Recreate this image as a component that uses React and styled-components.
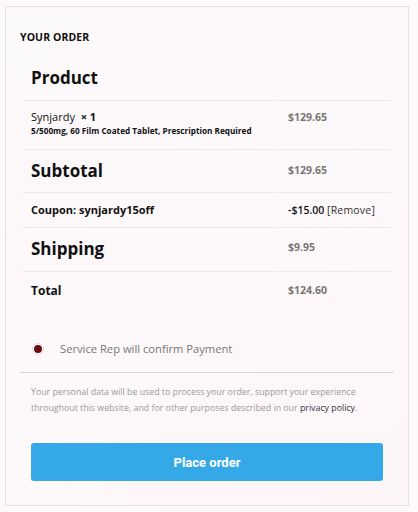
import React from "react"
import styled, { createGlobalStyle } from "styled-components"

const Global = createGlobalStyle`
  html, body { margin: 0; padding: 0; background: #fdf8fa; }
  body { font-family: "Open Sans", "Noto Sans", sans-serif; }
`

const Card = styled.div`
  margin: 6px 9px 0 5px;
  height: 500px;
  box-sizing: border-box;
  border: 1px solid #e3e1e3;
  background: linear-gradient(135deg, #fcf9fa 0%, #fdf6f9 100%);
  padding: 23px 15px 0 14px;
`

const Heading = styled.h3`
  margin: 0 0 12px;
  font-size: 10.5px;
  line-height: 14px;
  font-weight: 700;
  letter-spacing: 0.1px;
  color: #111;
`

const Table = styled.table`
  width: 372px;
  margin-left: 1px;
  border-collapse: separate;
  border-spacing: 2px 0;
  table-layout: fixed;
`

const Cell = styled.td`
  padding: ${p => p.$pad || "10px 8px"};
  border-bottom: ${p => (p.$last ? "none" : "1px solid #ebe7ea")};
  vertical-align: ${p => p.$valign || "top"};
  text-align: left;
  line-height: 14px;
  color: #111;
`

const Label = styled.span`
  display: block;
  font-size: ${p => p.$size}px;
  line-height: ${p => (p.$size > 14 ? 20 : 14)}px;
  font-weight: 700;
  color: #111;
`

const Price = styled.span`
  display: block;
  font-size: 10.5px;
  line-height: 14px;
  font-weight: 700;
  color: #777;
`

const Item = styled.div`
  font-size: 11px;
  line-height: 14px;
  color: #111;
  font-weight: 500;
`

const Meta = styled.div`
  font-size: 8.2px;
  line-height: 10px;
  font-weight: 700;
  color: #111;
  margin-top: 2px;
  white-space: nowrap;
`

const Discount = styled.span`
  display: block;
  font-size: 10.5px;
  line-height: 14px;
  font-weight: 600;
  color: #111;
  white-space: nowrap;
  a { color: #333; font-weight: 500; letter-spacing: 0.2px; }
`

const Payment = styled.div`
  display: flex;
  align-items: center;
  gap: 16px;
  margin-top: 31px;
  padding: 0 0 15px 12px;
  line-height: 16px;
  border-bottom: 1px solid #d8d4de;
  width: 362px;
`

const Radio = styled.span`
  width: 12px;
  height: 12px;
  box-sizing: border-box;
  border-radius: 50%;
  border: 1px solid #ddd;
  background: #fff;
  display: flex;
  align-items: center;
  justify-content: center;
  &::after {
    content: "";
    width: 8px;
    height: 8px;
    border-radius: 50%;
    background: #6a0b10;
  }
`

const PaymentLabel = styled.span`
  font-size: 11.2px;
  color: #777;
`

const Privacy = styled.p`
  margin: 11px 0 0 11px;
  font-size: 8.8px;
  line-height: 16px;
  color: #999;
  width: 345px;
  a { color: #333; text-decoration: none; }
`

const Button = styled.button`
  display: block;
  margin: 27px 0 0 11px;
  width: 352px;
  height: 38px;
  border: none;
  border-radius: 3px;
  background: #35a9e8;
  color: #fff;
  font-family: Roboto, sans-serif;
  font-size: 13px;
  font-weight: 700;
  cursor: pointer;
`

export default function App() {
  return (
    <>
      <Global />
      <Card>
        <Heading>YOUR ORDER</Heading>
        <Table>
          <colgroup>
            <col style={{ width: "255px" }} />
            <col />
          </colgroup>
          <tbody>
            <tr>
              <Cell $pad="12px 8px">
                <Label $size={17}>Product</Label>
              </Cell>
              <Cell />
            </tr>
            <tr>
              <Cell $pad="9px 8px 13px">
                <Item>Synjardy&nbsp; <b>× 1</b></Item>
                <Meta>5/500mg, 60 Film Coated Tablet, Prescription Required</Meta>
              </Cell>
              <Cell $pad="9px 8px 13px">
                <Price>$129.65</Price>
              </Cell>
            </tr>
            <tr>
              <Cell $pad="11px 8px">
                <Label $size={17}>Subtotal</Label>
              </Cell>
              <Cell $pad="13px 8px">
                <Price>$129.65</Price>
              </Cell>
            </tr>
            <tr>
              <Cell $pad="10px 8px">
                <Label $size={11}>Coupon: synjardy15off</Label>
              </Cell>
              <Cell $pad="10px 8px">
                <Discount>-$15.00 <a>[Remove]</a></Discount>
              </Cell>
            </tr>
            <tr>
              <Cell $pad="11px 8px 12px">
                <Label $size={17}>Shipping</Label>
              </Cell>
              <Cell $pad="12px 8px">
                <Price>$9.95</Price>
              </Cell>
            </tr>
            <tr>
              <Cell $pad="12px 8px" $last>
                <Label $size={12}>Total</Label>
              </Cell>
              <Cell $pad="11px 8px" $last>
                <Price>$124.60</Price>
              </Cell>
            </tr>
          </tbody>
        </Table>
        <Payment>
          <Radio />
          <PaymentLabel>Service Rep will confirm Payment</PaymentLabel>
        </Payment>
        <Privacy>
          Your personal data will be used to process your order, support your experience
          throughout this website, and for other purposes described in our{" "}
          <a href="#">privacy policy</a>.
        </Privacy>
        <Button>Place order</Button>
      </Card>
    </>
  )
}
